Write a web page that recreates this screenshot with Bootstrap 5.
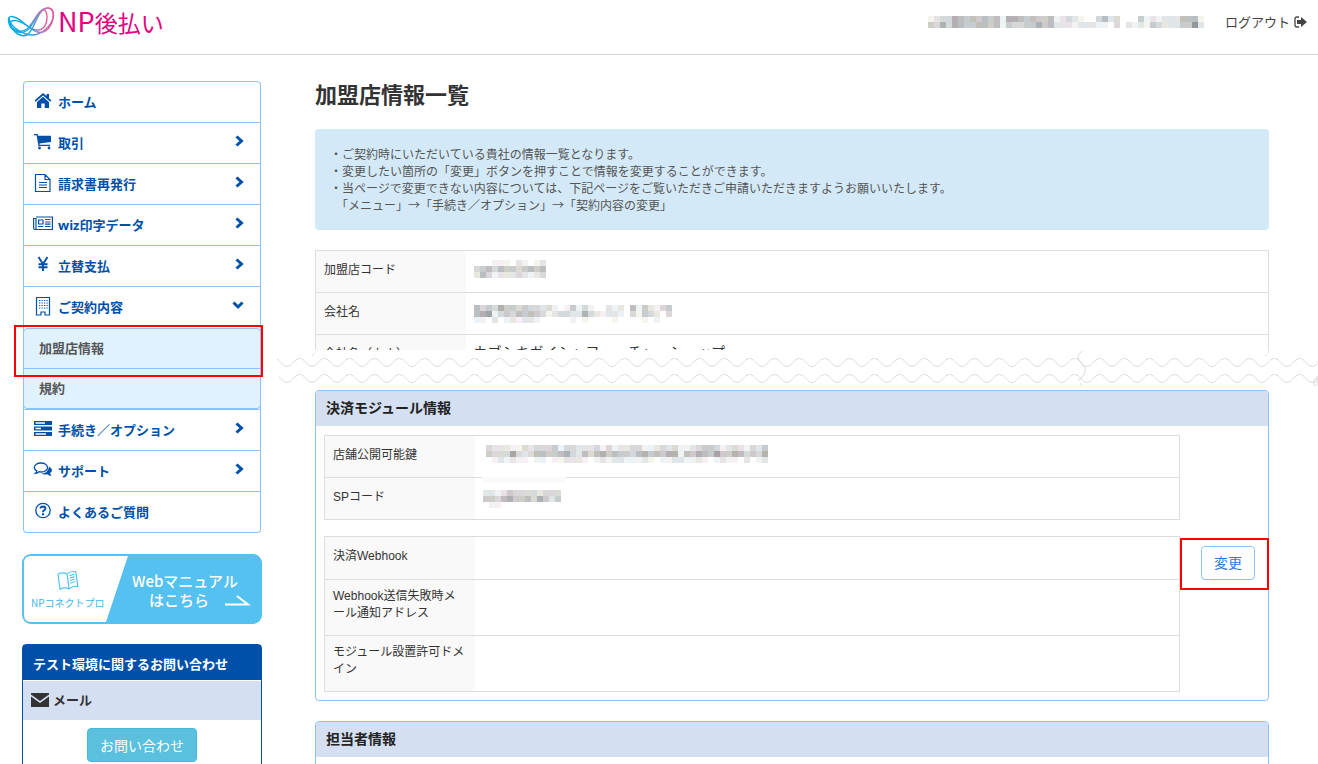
<!DOCTYPE html>
<html lang="ja">
<head>
<meta charset="utf-8">
<meta name="viewport" content="width=device-width, initial-scale=1">
<title>加盟店情報一覧</title>
<link rel="stylesheet" href="https://cdn.jsdelivr.net/npm/bootstrap@5.3.0/dist/css/bootstrap.min.css">
<style>
:root{--line:#8cc1fb;--navy:#0050aa;--pale:#d4e0f1;--grid:#ddd}
body{font-family:"Liberation Sans","Noto Sans CJK JP",sans-serif;font-size:12px;line-height:17px;color:#333;height:100vh;overflow:hidden;background:#fff}
a{text-decoration:none}
svg{display:block;flex-shrink:0}
.site-head{height:55px;border-bottom:1px solid #d3dbe2;padding:0 11px 11px 7px}
.brand{color:#e4007f;font-family:"Noto Sans CJK JP",sans-serif;font-size:23px;line-height:32px}
.brand-np{font-size:27px}
.account{gap:21px}
.logout{color:#444;font-size:13px;font-family:"Noto Sans CJK JP",sans-serif}
.side{width:240px;margin-left:22px;padding-top:26px;flex-shrink:0}
.side-nav{margin:0 1px 21px;border:1px solid var(--line);border-top:0;border-radius:4px;font-family:"Open Sans","Noto Sans CJK JP",sans-serif;font-size:13px;font-weight:700}
.side-nav .item{height:41px;border-top:1px solid var(--line);padding:0 16px 0 9px;gap:5px;color:var(--navy)}
.side-nav .item:first-child{border-radius:4px 4px 0 0}
.side-nav .item [data-chev]{margin-bottom:4px}
.ico{width:20px;height:20px;margin-bottom:2px}
.sub{margin:1px -1px 0;border:1px solid var(--line);border-radius:4px;background:#dff2fe}
.sub a{height:39px;padding-left:15px;color:#555}
.sub>a{height:40px;border-top:1px solid var(--line)}
.mark-box{position:absolute;border:2px solid #f00;pointer-events:none}
.mark-sub{inset:-4px -3px -9px -10px}
.banner{margin-bottom:20px}
.contact{border:1px solid var(--navy);border-radius:4px 4px 0 0;font-size:13px;font-weight:700;font-family:"Noto Sans CJK JP",sans-serif}
.contact-title{background:var(--navy);color:#fff;height:36px;padding:2px 10px 0;border-bottom:1px solid #fff;font-size:13px}
.contact-sub{background:var(--pale);height:39px;padding:0 8px 2px;gap:4px;font-size:13px}
.btn-ask{background:#5bc0de;border-color:#46b8da;color:#fff;font-size:14px;line-height:20px;padding:6px 12px;border-radius:4px}
.main-col{margin:0 49px 0 53px;padding-top:29px;min-width:0}
.page-title{font-size:22px;line-height:24px;font-weight:700;margin-bottom:21px}
.note{font-family:"Noto Sans CJK JP",sans-serif;background:#d4e9f8;color:#555;border-radius:4px;padding:16px 15px 17px;margin-bottom:20px}
.info-table{margin:0;border:1px solid var(--grid);color:#333}
.info-table>tbody>tr>*{padding:0 8px 6px;border:0;border-top:1px solid var(--grid);vertical-align:middle;height:42px;box-shadow:none}
.info-table>tbody>tr>th{width:150px;padding-bottom:3px;background:#f9f9f9;font-weight:400}
.info-table>tbody>tr.mid>*{height:43px}
.info-table>tbody>tr.tall>*{height:56px;padding-bottom:6px}
.info-table .kana{font-size:14px}
.clip{height:100px;overflow:hidden}
.waves{width:calc(100% + 88px);height:40px;margin-left:-39px}
.panel{border:1px solid var(--line);border-radius:4px;margin-bottom:20px}
.panel-title{background:var(--pale);height:35px;padding:0 10px;font-size:14px;font-weight:700;color:#222;margin:0;border-radius:3px 3px 0 0}
.panel-in{padding:9px 0 8px 8px}
.act{width:88px;flex-shrink:0;padding:10px 13px 0 21px}
.mark-act{inset:2px -1px auto 0;height:52px}
.btn-edit{border:1px solid var(--line);color:#3277d5;background:#fff;font-size:14px;line-height:20px;padding:6px 0;border-radius:4px;width:54px}
.gap-tables{margin-top:16px}
.info-table .key{padding-left:11px}
.smear::before{content:"";position:absolute;left:7px;top:-1px;width:84px;height:6px;background:#fafafa}
</style>
</head>
<body>
<header class="site-head d-flex align-items-center justify-content-between">
  <a href="#" class="brand d-flex align-items-center">
    <svg width="51" height="32" viewBox="0 0 51 32" fill="none" stroke-width="1.4">
      <defs><linearGradient id="lg" x1="0" x2="1"><stop offset="0" stop-color="#00aeeb"/><stop offset=".5" stop-color="#1fa6e0"/><stop offset=".75" stop-color="#b07dbb"/><stop offset="1" stop-color="#e4569c"/></linearGradient></defs>
      <g stroke="url(#lg)">
        <path d="M1.500 13C2 8 10 11 18 18C26 25 34 30 41 23C48 14 48 2 41 2C33 2 29 13 24 20C18 30 6 27 2.500 19Q1 16 1.500 13Z"/>
        <path d="M3 17C5 12 13 15 22 21C30 26 37 25 39.500 16C41 8 39 3 35.500 4C30 6 27 17 20 23C13 28 3 23 3 17Z"/>
        <path d="M2 12C3 19 10 25 19 28C34 33 46 18 46.500 9C46.500 1 39 0 34 6C28 13 27 24 20 29C12 32 3 24 2 12Z"/>
      </g>
    </svg>
    <span><span class="brand-np">NP</span>後払い</span>
  </a>
  <div class="account d-flex align-items-center">
    <span data-mosaic="1233654545451665454451232100352300041212225551|4363654455451433446452221222110302121432224482"></span>
    <a href="#" class="logout d-flex align-items-center gap-1"><span>ログアウト</span>
      <svg width="13" height="12" viewBox="0 0 13 12"><path d="M5 1H3Q1 1 1 3V9Q1 11 3 11H5" fill="none" stroke="#444" stroke-width="1.3"/><path d="M3 4H7V1L13 6L7 11V8H3Z" fill="#444"/></svg></a>
  </div>
</header>

<div class="d-flex">
  <aside class="side">
    <nav class="side-nav">
      <a href="#" class="item d-flex align-items-center"><svg class="ico" viewBox="0 0 20 20" fill="currentColor"><path d="M10 2L1.500 9.500L2.700 10.800L10 4.500L17.300 10.800L18.500 9.500L16 7.300V3H13.500V5Z"/><path d="M10 5.800L4 11V17H8.300V12.500H11.700V17H16V11Z"/></svg><span>ホーム</span></a>
      <a href="#" class="item d-flex align-items-center"><svg class="ico" viewBox="0 0 20 20" fill="currentColor"><path d="M1 2H4.700L5 3.700H18V10L6.400 11.600L6.600 12.700H17V14H5.400L3.600 3.300H1Z"/><circle cx="6.500" cy="16" r="1.400"/><circle cx="16" cy="16" r="1.400"/></svg><span class="flex-grow-1">取引</span><svg width="9" height="12" data-chev="r"></svg></a>
      <a href="#" class="item d-flex align-items-center"><svg class="ico" viewBox="0 0 20 20" fill="none" stroke="currentColor" stroke-width="1.200"><path d="M2.500 1.500H12L17 6.500V18.500H2.500ZM12 1.500V6.500H17M6 9.500H14M6 12H14M6 14.500H14"/></svg><span class="flex-grow-1">請求書再発行</span><svg width="9" height="12" data-chev="r"></svg></a>
      <a href="#" class="item d-flex align-items-center"><svg class="ico" viewBox="0 0 20 20" fill="none" stroke="currentColor" stroke-width="1.200"><path d="M3 3H19.400V15.500H2Q.6 15.500 .6 14V4.500H3V14Q3 15.500 2 15.500M5.600 6H10V10H5.600ZM5 12.500H10.500M12 5.500H17.500M12 8H17.500M12 10.200H17.500M12 12.500H17.500"/></svg><span class="flex-grow-1">wiz印字データ</span><svg width="9" height="12" data-chev="r"></svg></a>
      <a href="#" class="item d-flex align-items-center"><svg class="ico" viewBox="0 0 20 20" fill="none" stroke="currentColor" stroke-width="1.900"><path d="M5.500 2L10 9L14.500 2M10 9V16M5.500 9.200H14.500M5.500 12.200H14.500"/></svg><span class="flex-grow-1">立替支払</span><svg width="9" height="12" data-chev="r"></svg></a>
      <a href="#" class="item d-flex align-items-center"><svg class="ico" viewBox="0 0 20 20" fill="none" stroke="currentColor" stroke-width="1.200"><path d="M3.500 1.500H16.500V19H12V16H8V19H3.500Z"/><path d="M6 4.500H15M6 7H15M6 9.500H15M6 12H15" stroke-dasharray="1.300 1.200"/></svg><span class="flex-grow-1">ご契約内容</span><svg width="12" height="9" data-chev="d"></svg></a>
      <div class="sub">
        <div class="position-relative"><a href="#" class="d-flex align-items-center">加盟店情報</a><span class="mark-box mark-sub"></span></div>
        <a href="#" class="d-flex align-items-center">規約</a>
      </div>
      <a href="#" class="item d-flex align-items-center"><svg class="ico" viewBox="0 0 20 20" fill="currentColor"><path fill-rule="evenodd" d="M1 2H19V6H1ZM2.500 3.300V4.700H12V3.300ZM1 7.500H19V11.500H1ZM2.500 8.800V10.200H8V8.800ZM1 13H19V17H1ZM2.500 14.300V15.700H13V14.300Z"/></svg><span class="flex-grow-1">手続き／オプション</span><svg width="9" height="12" data-chev="r"></svg></a>
      <a href="#" class="item d-flex align-items-center"><svg class="ico" viewBox="0 0 20 20" fill="none" stroke="currentColor" stroke-width="1.300"><path d="M8 3C11.600 3 14.500 5 14.500 7.500S11.600 12 8 12Q7 12 6 11.700Q4.500 13 2.500 13.300Q3.800 12 3.800 10.800Q1.300 9.500 1.300 7.500C1.300 5 4.400 3 8 3Z"/><path d="M16 6.500Q19 8 19 10.300Q19 12 17 13.300Q17.500 15 18.700 16Q16 15.800 14.300 14.300Q11 15 8.500 13.500Q15.500 13 16 6.500Z" fill="currentColor" stroke="none"/></svg><span class="flex-grow-1">サポート</span><svg width="9" height="12" data-chev="r"></svg></a>
      <a href="#" class="item d-flex align-items-center"><svg class="ico" viewBox="0 0 20 20" fill="none" stroke="currentColor"><circle cx="10" cy="9.500" r="7.200" stroke-width="1.300"/><path d="M7.500 7.500Q7.700 5.500 10 5.500Q12.400 5.600 12.400 7.400Q12.300 8.700 11 9.300Q10 9.900 10 11.200" stroke-width="1.900"/><path d="M9 12.300H11V14.200H9Z" fill="currentColor" stroke="none"/></svg><span>よくあるご質問</span></a>
    </nav>

    <a href="#" class="d-block banner">
      <svg width="100%" height="70" viewBox="0 0 240 70" font-family="'Noto Sans CJK JP',sans-serif">
        <rect width="240" height="70" rx="9" fill="#55c1f1"/>
        <path d="M9 2H106L84 68H9Q2 68 2 61V9Q2 2 9 2Z" fill="#fff"/>
        <g fill="none" stroke="#55c1f1" stroke-width="1.200" transform="rotate(-8 46 27)"><path d="M46 20Q42 17 37 19V34Q42 32 46 35Q50 32 55 34V19Q50 17 46 20V35M48 22L53 21M48 24.500L53 23.500M48 27L53 26M48 29.500L53 28.500"/></g>
        <text x="9" y="53" font-size="10" fill="#45b5e8">NPコネクトプロ</text>
        <g fill="#fff" font-size="15" font-weight="500"><text x="110" y="33">Webマニュアル</text><text x="127" y="52">はこちら</text></g>
        <path d="M203 50.500H226L215 42" fill="none" stroke="#fff" stroke-width="2"/>
      </svg>
    </a>

    <section class="contact pb-3">
      <h2 class="contact-title d-flex align-items-center m-0 fw-bold">テスト環境に関するお問い合わせ</h2>
      <h3 class="contact-sub d-flex align-items-center m-0 fw-bold"><svg width="18" height="14" viewBox="0 0 18 14" fill="#333"><path d="M0 0H18V1.500L9 8L0 1.500Z"/><path d="M0 3.500L9 10L18 3.500V14H0Z"/></svg><span>メール</span></h3>
      <div class="text-center pt-2"><button type="button" class="btn btn-ask">お問い合わせ</button></div>
    </section>
  </aside>

  <main class="main-col flex-grow-1">
    <h1 class="page-title">加盟店情報一覧</h1>
    <div class="note">・ご契約時にいただいている貴社の情報一覧となります。<br>・変更したい箇所の「変更」ボタンを押すことで情報を変更することができます。<br>・当ページで変更できない内容については、下記ページをご覧いただきご申請いただきますようお願いいたします。<br>　「メニュー」→「手続き／オプション」→「契約内容の変更」</div>

    <div class="clip">
      <table class="table info-table">
        <tbody>
          <tr><th scope="row">加盟店コード</th><td><span data-mosaic="000111021012|345354434545|253122232123"></span></td></tr>
          <tr><th scope="row">会社名</th><td><span data-mosaic="000000000000000000000000000000000|534364434332310141310021205142134|567134354543123322632122103143203|110201212210000010100001000010100"></span></td></tr>
          <tr><th scope="row">会社名（カナ）</th><td class="kana">カブシキガイシャフューチャーショップ</td></tr>
        </tbody>
      </table>
    </div>
    <svg class="waves" fill="none" stroke="#d9d9d9">
      <defs><pattern id="wv" x="11" y="0" width="25" height="40" patternUnits="userSpaceOnUse"><path d="M-1 16.500H0C5 16.500 7 8.500 12.500 8.500S20 16.500 25 16.500H26M-1 32.500H0C5 32.500 7 24.500 12.500 24.500S20 32.500 25 32.500H26"/></pattern></defs>
      <rect x="1" width="100%" height="20" fill="url(#wv)" stroke="none"/>
      <rect x="3" y="20" width="100%" height="20" fill="url(#wv)" stroke="none"/>
      <path d="M36 6L39 3M806 1Q800 6 803 10T809 18Q811 23 802 31M805 33V36"/>
      <svg x="100%" overflow="visible"><path d="M-50 1V3M-53 6L-51 4M-1 26V36M-1 27Q-6 31 -3 36"/></svg>
    </svg>

    <section class="panel">
      <h2 class="panel-title d-flex align-items-center">決済モジュール情報</h2>
      <div class="panel-in">
        <div class="d-flex">
          <table class="table info-table">
            <tbody>
              <tr><th scope="row">店舗公開可能鍵</th><td class="key"><span data-mosaic="32221132333413322231312233112323112344312321324|43337323554456325356454435645466154654744653436|01212110110112221012122111210112211210121102012"></span></td></tr>
              <tr><th scope="row">SPコード</th><td class="position-relative smear"><span data-mosaic="0000000000000|2212433332333|4435644536424|0110000000000"></span></td></tr>
            </tbody>
          </table>
          <div class="act"></div>
        </div>
        <div class="d-flex gap-tables">
          <table class="table info-table">
            <tbody>
              <tr class="mid"><th scope="row">決済Webhook</th><td></td></tr>
              <tr class="tall"><th scope="row">Webhook送信失敗時メ<br>ール通知アドレス</th><td></td></tr>
              <tr class="tall"><th scope="row">モジュール設置許可ドメ<br>イン</th><td></td></tr>
            </tbody>
          </table>
          <div class="act position-relative"><button type="button" class="btn btn-edit">変更</button><span class="mark-box mark-act"></span></div>
        </div>
      </div>
    </section>

    <section class="panel">
      <h2 class="panel-title d-flex align-items-center">担当者情報</h2>
      <div class="panel-in pb-5"></div>
    </section>
  </main>
</div>

<script src="https://cdn.jsdelivr.net/npm/bootstrap@5.3.0/dist/js/bootstrap.bundle.min.js"></script>
<script>
// Masked values: each digit is the darkness of one 6px block, rows split by "|".
const tints = [[0,0,0],[3,2,-5],[-5,0,5],[4,-3,1],[-4,2,1]];
document.querySelectorAll('[data-mosaic]').forEach(el => {
  const rows = el.dataset.mosaic.split('|');
  let out = '';
  rows.forEach((row, r) => [...row].forEach((d, i) => {
    if (d === '0') return;
    const g = 255 - d * 13, t = tints[(i * 3 + r * 2 + +d) % 5];
    out += `<rect x="${i * 6}" y="${r * 6}" width="6" height="6" fill="rgb(${t.map(v => Math.min(255, g + v)).join()})"/>`;
  }));
  el.innerHTML = `<svg width="${rows[0].length * 6}" height="${rows.length * 6}" shape-rendering="crispEdges">${out}</svg>`;
});
document.querySelectorAll('[data-chev]').forEach(s => {
  const d = s.dataset.chev === 'r' ? 'M1.500 1.500L6.500 6L1.500 10.500' : 'M1.500 1.500L6 6L10.500 1.500';
  s.innerHTML = `<path d="${d}" fill="none" stroke="currentColor" stroke-width="3"/>`;
});
</script>
</body>
</html>
